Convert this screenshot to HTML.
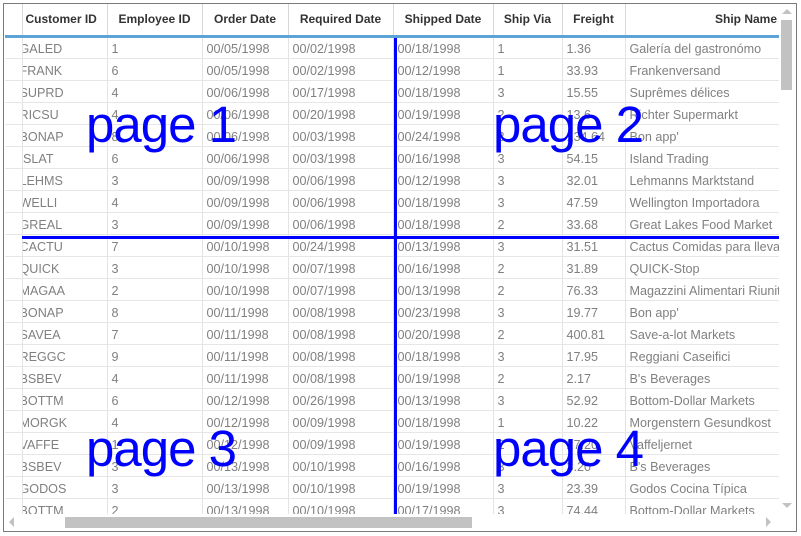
<!DOCTYPE html>
<html><head><meta charset="utf-8"><style>
*{margin:0;padding:0;box-sizing:border-box}
body{width:801px;height:536px;background:#fff;position:relative;overflow:hidden;font-family:"Liberation Sans",sans-serif}
.frame{position:absolute;left:3px;top:3px;width:794px;height:529px;border:1px solid #7a7a7a}
.clip{position:absolute;left:5px;top:4px;width:774px;height:510px;overflow:hidden}
table{border-collapse:collapse;table-layout:fixed;width:774px}
td,th{white-space:nowrap;overflow:hidden;border-right:1px solid #e3e3e3;font-size:12px}
th{height:32px;color:#333;font-weight:bold;text-align:center;border-bottom:3px solid #5ca3d8;border-right:1px solid #d8d8d8;padding-bottom:1px}
td{height:22px;border-bottom:1px solid #e6e6e6;color:#808080;padding-left:4px;padding-top:3px;font-size:12.6px}
td.c{padding-left:0;text-indent:-3px}
.pg{position:absolute;color:#0000ff;font-size:51px;line-height:1;letter-spacing:-1px}
.vl{position:absolute;left:394px;top:38px;width:3px;height:476px;background:#0000ff}
.hl{position:absolute;left:22px;top:236px;width:757px;height:3px;background:#0000ff}
.vs{position:absolute;left:780px;top:4px;width:16px;height:510px;background:#fff}
.vt{position:absolute;left:781px;top:20px;width:11px;height:70px;background:#c2c2c2}
.hs{position:absolute;left:65px;top:517px;width:407px;height:11px;background:#c2c2c2}
.ar{position:absolute;width:0;height:0}
</style></head><body>
<div class="frame"></div>
<div class="clip"><table>
<colgroup><col style="width:17px"><col style="width:85px"><col style="width:95px"><col style="width:86px"><col style="width:105px"><col style="width:100px"><col style="width:69px"><col style="width:63px"><col style="width:154px"></colgroup>
<tr><th></th><th style="text-align:left;padding-left:3px">Customer ID</th><th>Employee ID</th><th>Order Date</th><th>Required Date</th><th>Shipped Date</th><th>Ship Via</th><th>Freight</th><th style="text-align:right;padding-right:2px;border-right:none">Ship Name</th></tr>
<tr><td></td><td class="c">GALED</td><td>1</td><td>00/05/1998</td><td>00/02/1998</td><td>00/18/1998</td><td>1</td><td>1.36</td><td>Galería del gastronómo</td></tr>
<tr><td></td><td class="c">FRANK</td><td>6</td><td>00/05/1998</td><td>00/02/1998</td><td>00/12/1998</td><td>1</td><td>33.93</td><td>Frankenversand</td></tr>
<tr><td></td><td class="c">SUPRD</td><td>4</td><td>00/06/1998</td><td>00/17/1998</td><td>00/18/1998</td><td>3</td><td>15.55</td><td>Suprêmes délices</td></tr>
<tr><td></td><td class="c">RICSU</td><td>4</td><td>00/06/1998</td><td>00/20/1998</td><td>00/19/1998</td><td>2</td><td>13.6</td><td>Richter Supermarkt</td></tr>
<tr><td></td><td class="c">BONAP</td><td>8</td><td>00/06/1998</td><td>00/03/1998</td><td>00/24/1998</td><td>3</td><td>134.64</td><td>Bon app'</td></tr>
<tr><td></td><td class="c">ISLAT</td><td>6</td><td>00/06/1998</td><td>00/03/1998</td><td>00/16/1998</td><td>3</td><td>54.15</td><td>Island Trading</td></tr>
<tr><td></td><td class="c">LEHMS</td><td>3</td><td>00/09/1998</td><td>00/06/1998</td><td>00/12/1998</td><td>3</td><td>32.01</td><td>Lehmanns Marktstand</td></tr>
<tr><td></td><td class="c">WELLI</td><td>4</td><td>00/09/1998</td><td>00/06/1998</td><td>00/18/1998</td><td>3</td><td>47.59</td><td>Wellington Importadora</td></tr>
<tr><td></td><td class="c">GREAL</td><td>3</td><td>00/09/1998</td><td>00/06/1998</td><td>00/18/1998</td><td>2</td><td>33.68</td><td>Great Lakes Food Market</td></tr>
<tr><td></td><td class="c">CACTU</td><td>7</td><td>00/10/1998</td><td>00/24/1998</td><td>00/13/1998</td><td>3</td><td>31.51</td><td>Cactus Comidas para llevar</td></tr>
<tr><td></td><td class="c">QUICK</td><td>3</td><td>00/10/1998</td><td>00/07/1998</td><td>00/16/1998</td><td>2</td><td>31.89</td><td>QUICK-Stop</td></tr>
<tr><td></td><td class="c">MAGAA</td><td>2</td><td>00/10/1998</td><td>00/07/1998</td><td>00/13/1998</td><td>2</td><td>76.33</td><td>Magazzini Alimentari Riuniti</td></tr>
<tr><td></td><td class="c">BONAP</td><td>8</td><td>00/11/1998</td><td>00/08/1998</td><td>00/23/1998</td><td>3</td><td>19.77</td><td>Bon app'</td></tr>
<tr><td></td><td class="c">SAVEA</td><td>7</td><td>00/11/1998</td><td>00/08/1998</td><td>00/20/1998</td><td>2</td><td>400.81</td><td>Save-a-lot Markets</td></tr>
<tr><td></td><td class="c">REGGC</td><td>9</td><td>00/11/1998</td><td>00/08/1998</td><td>00/18/1998</td><td>3</td><td>17.95</td><td>Reggiani Caseifici</td></tr>
<tr><td></td><td class="c">BSBEV</td><td>4</td><td>00/11/1998</td><td>00/08/1998</td><td>00/19/1998</td><td>2</td><td>2.17</td><td>B's Beverages</td></tr>
<tr><td></td><td class="c">BOTTM</td><td>6</td><td>00/12/1998</td><td>00/26/1998</td><td>00/13/1998</td><td>3</td><td>52.92</td><td>Bottom-Dollar Markets</td></tr>
<tr><td></td><td class="c">MORGK</td><td>4</td><td>00/12/1998</td><td>00/09/1998</td><td>00/18/1998</td><td>1</td><td>10.22</td><td>Morgenstern Gesundkost</td></tr>
<tr><td></td><td class="c">VAFFE</td><td>1</td><td>00/12/1998</td><td>00/09/1998</td><td>00/19/1998</td><td>2</td><td>27.20</td><td>Vaffeljernet</td></tr>
<tr><td></td><td class="c">BSBEV</td><td>3</td><td>00/13/1998</td><td>00/10/1998</td><td>00/16/1998</td><td>3</td><td>3.20</td><td>B's Beverages</td></tr>
<tr><td></td><td class="c">GODOS</td><td>3</td><td>00/13/1998</td><td>00/10/1998</td><td>00/19/1998</td><td>3</td><td>23.39</td><td>Godos Cocina Típica</td></tr>
<tr><td></td><td class="c">BOTTM</td><td>2</td><td>00/13/1998</td><td>00/10/1998</td><td>00/17/1998</td><td>3</td><td>74.44</td><td>Bottom-Dollar Markets</td></tr>
</table></div>
<div class="vl"></div><div class="hl"></div>
<div class="pg" style="left:86px;top:99px">page 1</div>
<div class="pg" style="left:493px;top:99px">page 2</div>
<div class="pg" style="left:86px;top:423px">page 3</div>
<div class="pg" style="left:493px;top:423px">page 4</div>
<div class="vs"></div><div class="vt"></div>
<div class="ar" style="left:782px;top:9px;border-left:5px solid transparent;border-right:5px solid transparent;border-bottom:5px solid #c2c2c2"></div>
<div class="ar" style="left:782px;top:503px;border-left:5px solid transparent;border-right:5px solid transparent;border-top:5px solid #c2c2c2"></div>
<div class="hs"></div>
<div class="ar" style="left:9px;top:517px;border-top:5px solid transparent;border-bottom:5px solid transparent;border-right:5px solid #c2c2c2"></div>
<div class="ar" style="left:766px;top:517px;border-top:5px solid transparent;border-bottom:5px solid transparent;border-left:5px solid #c2c2c2"></div>
</body></html>
